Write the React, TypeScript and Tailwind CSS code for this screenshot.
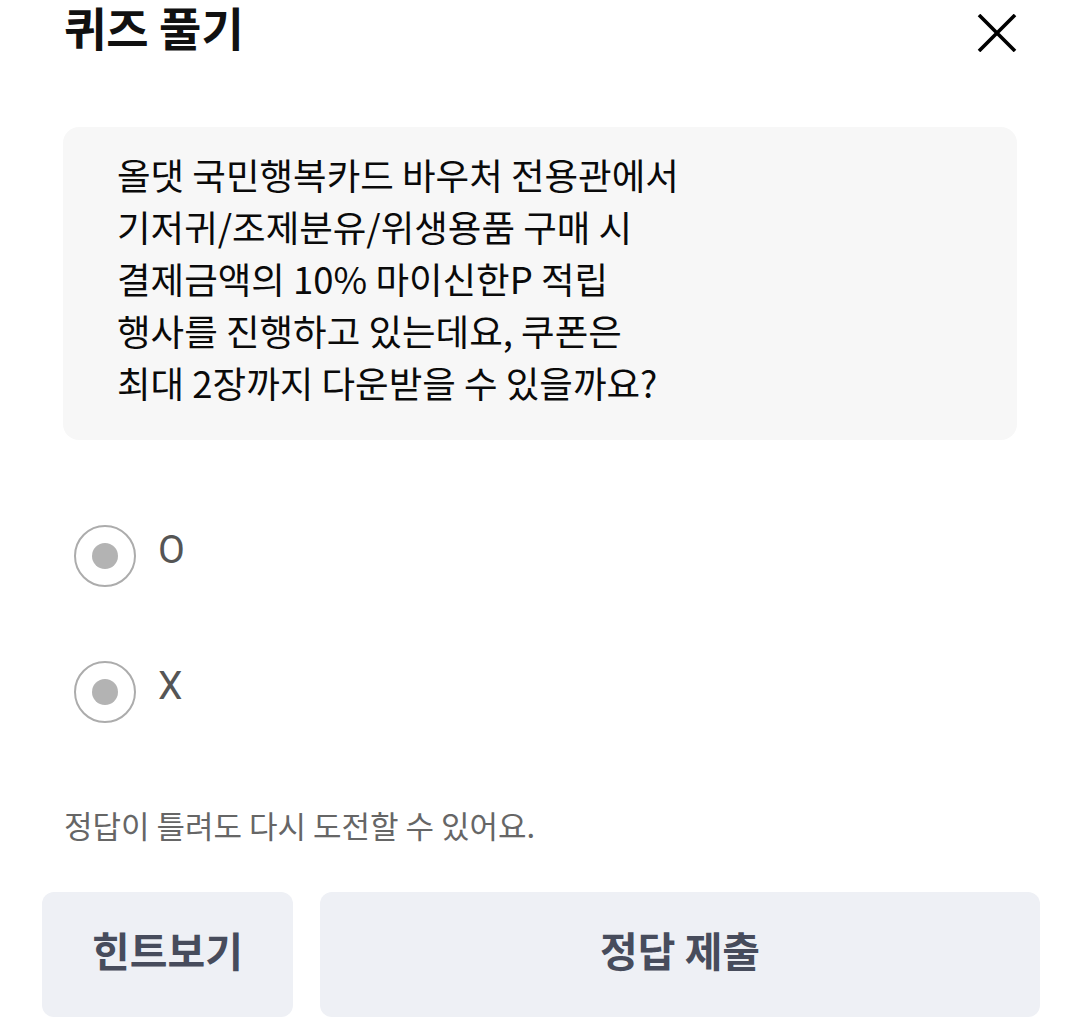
const font = { fontFamily: '"Noto Sans CJK KR", "Noto Sans", sans-serif' };

const lines = [
    "올댓 국민행복카드 바우처 전용관에서",
    "기저귀/조제분유/위생용품 구매 시",
    "결제금액의 10% 마이신한P 적립",
    "행사를 진행하고 있는데요, 쿠폰은",
    "최대 2장까지 다운받을 수 있을까요?",
];

const Radio = ({ label }: { label: string }) => {
    return (
        <label className="flex h-[62px] items-center gap-[22px] pl-[11px]">
            <span className="flex h-[62px] w-[62px] items-center justify-center rounded-full border-2 border-[#acacac]">
                <span className="h-[26px] w-[26px] rounded-full bg-[#b3b3b3]" />
            </span>
            <span
                className="-mt-[12px] text-[39px] leading-none text-[#555555]"
                style={{ fontFamily: 'Roboto, "Noto Sans", sans-serif' }}
            >
                {label}
            </span>
        </label>
    );
};

export default function App() {
    return (
        <div className="h-[1032px] w-[1080px] overflow-hidden bg-white" style={font}>
            <div className="px-[63px]">
                <header className="flex h-[58px] items-start justify-between">
                    <h1 className="mt-[3px] pl-[1px] text-[46px] font-bold leading-none text-[#111111]">퀴즈 풀기</h1>
                    <button className="mt-[14px] h-[38px] w-[40px]">
                        <svg viewBox="0 0 40 38" className="h-[38px] w-[40px]">
                            <path d="M2 1 L38 37 M38 1 L2 37" stroke="#000" strokeWidth="3.6" fill="none" />
                        </svg>
                    </button>
                </header>

                <div className="mt-[69px] rounded-[16px] bg-[#f7f7f7] pb-[31px] pl-[54px] pt-[22px]">
                    {lines.map((l) => (
                        <p key={l} className="text-[36.5px] leading-[52px] text-[#0a0a0a]">
                            {l}
                        </p>
                    ))}
                </div>

                <div className="mt-[85px] flex flex-col gap-[74px]">
                    <Radio label="O" />
                    <Radio label="X" />
                </div>

                <p className="mt-[82px] pl-[1px] text-[31px] leading-[40px] text-[#666666]">
                    정답이 틀려도 다시 도전할 수 있어요.
                </p>
            </div>

            <div className="mt-[47px] flex gap-[27px] pl-[42px] pr-[40px]">
                <button className="flex h-[125px] w-[251px] items-center justify-center rounded-[12px] bg-[#eef0f5] pb-[10px] text-[41px] font-bold text-[#474c5c]">
                    힌트보기
                </button>
                <button className="flex h-[125px] flex-1 items-center justify-center rounded-[12px] bg-[#eef0f5] pb-[10px] text-[41px] font-bold text-[#474c5c]">
                    정답 제출
                </button>
            </div>
        </div>
    );
}
